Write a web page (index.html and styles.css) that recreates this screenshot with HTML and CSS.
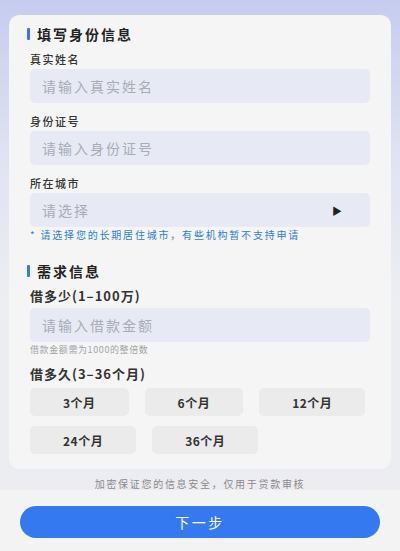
FILE: index.html
```html
<!DOCTYPE html>
<html lang="zh-CN">
<head>
    <meta charset="UTF-8">
    <meta name="viewport" content="width=device-width, initial-scale=1.0">
    <title>填写信息</title>
    <link rel="stylesheet" href="styles.css">
</head>
<body>
    <div class="page">
        <div class="card">
            <!-- 身份信息 -->
            <h2 class="section-title">填写身份信息</h2>

            <label class="field-label">真实姓名</label>
            <div class="input">请输入真实姓名</div>

            <label class="field-label">身份证号</label>
            <div class="input">请输入身份证号</div>

            <label class="field-label">所在城市</label>
            <div class="input select">
                <span>请选择</span>
                <span class="arrow">&#9654;</span>
            </div>
            <p class="tip">* 请选择您的长期居住城市，有些机构暂不支持申请</p>

            <!-- 需求信息 -->
            <h2 class="section-title second">需求信息</h2>

            <label class="field-label big">借多少(1–100万)</label>
            <div class="input">请输入借款金额</div>
            <p class="note">借款金额需为1000的整倍数</p>

            <label class="field-label big">借多久(3–36个月)</label>
            <div class="periods">
                <button class="period">3个月</button>
                <button class="period">6个月</button>
                <button class="period">12个月</button>
                <button class="period">24个月</button>
                <button class="period">36个月</button>
            </div>
        </div>
        <p class="safe">加密保证您的信息安全，仅用于贷款审核</p>
    </div>

    <div class="bottom-bar">
        <button class="next-btn">下一步</button>
    </div>
</body>
</html>
```

FILE: styles.css
```css
*, *::before, *::after {
    margin: 0;
    padding: 0;
    box-sizing: border-box;
}

body {
    font-family: "Noto Sans CJK SC", "Noto Sans", sans-serif;
    color: #333;
    background: linear-gradient(180deg, #c5ccef 0px, #dfe2f1 150px, #eceef2 300px, #ececf0 100%);
    height: 551px;
    overflow: hidden;
}

.page {
    padding: 15px 9px 0;
}

.card {
    background: #f5f5f5;
    border-radius: 10px;
    padding: 10px 21px 15px;
}

.section-title {
    position: relative;
    font-size: 14px;
    line-height: 18px;
    font-weight: bold;
    color: #222;
    letter-spacing: 2px;
    padding-left: 7px;
}

.section-title::before {
    content: "";
    position: absolute;
    left: -3px;
    top: 3px;
    width: 3px;
    height: 12px;
    border-radius: 1px;
    background: #3478f0;
}

.section-title.second {
    margin-top: 20px;
}

.field-label {
    display: block;
    font-size: 11px;
    line-height: 16px;
    font-weight: 500;
    letter-spacing: 1.5px;
    margin-top: 8px;
    margin-bottom: 2px;
}

.input + .field-label {
    margin-top: 10px;
}

.field-label.big {
    font-size: 13px;
    line-height: 18px;
    font-weight: bold;
    letter-spacing: 1px;
    margin-top: 7px;
    margin-bottom: 3px;
}

.note + .field-label.big {
    margin-top: 9px;
    margin-bottom: 5px;
}

.input {
    height: 34px;
    background: #e7eaf4;
    border-radius: 5px;
    padding: 0 12px;
    display: flex;
    align-items: center;
    font-size: 14px;
    letter-spacing: 2px;
    color: #a9acb6;
}

.select {
    justify-content: space-between;
}

.select .arrow {
    font-size: 10px;
    color: #222;
    margin-right: 16px;
    letter-spacing: 0;
}

.tip {
    font-size: 10px;
    line-height: 14px;
    margin-top: 1px;
    color: #2b7fd4;
    letter-spacing: 1.8px;
}

.note {
    font-size: 9px;
    line-height: 12px;
    margin-top: 2px;
    color: #a3a3a3;
    letter-spacing: 0.6px;
}

.periods {
    display: flex;
    flex-wrap: wrap;
    gap: 10px 16px;
}

.period {
    height: 28px;
    padding: 0 33px;
    border: none;
    border-radius: 5px;
    background: #ebebeb;
    font-family: inherit;
    font-size: 12px;
    font-weight: bold;
    color: #333;
    letter-spacing: 0.5px;
    white-space: nowrap;
}

.safe {
    margin-top: 8px;
    text-align: center;
    font-size: 10px;
    line-height: 14px;
    color: #8a8a8a;
    letter-spacing: 1.7px;
}

.bottom-bar {
    margin-top: -1px;
    height: 61px;
    background: #f3f3f3;
    padding: 16px 20px 0;
}

.next-btn {
    width: 100%;
    height: 32px;
    border: none;
    border-radius: 16px;
    background: #3579f0;
    color: #fff;
    font-family: inherit;
    font-size: 14px;
    letter-spacing: 2.5px;
}
```
